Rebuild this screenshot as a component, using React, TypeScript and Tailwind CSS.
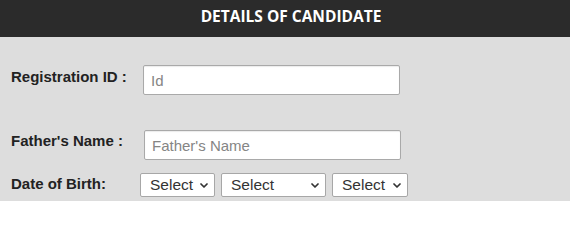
import React from "react";

function Chevron() {
  return (
    <svg width="8" height="5" viewBox="0 0 8 5" className="shrink-0">
      <path d="M1 1 L4 4 L7 1" fill="none" stroke="#333" strokeWidth="1.7" strokeLinecap="round" strokeLinejoin="round" />
    </svg>
  );
}

function FakeSelect({ w }: { w: string }) {
  return (
    <div
      className={`${w} h-[24px] bg-white border border-[#a7a7a7] rounded-[2px] flex items-center justify-between pl-[9px] pr-[6px] text-[15.5px] text-[#333] leading-none`}
      style={{ fontFamily: '"Liberation Sans", Arial, sans-serif' }}
    >
      <span>Select</span>
      <Chevron />
    </div>
  );
}

export default function App() {
  const sans = { fontFamily: '"Liberation Sans", Arial, sans-serif' };
  return (
    <div className="w-[570px] h-[201px] bg-[#dddddd] overflow-hidden" style={sans}>
      <div className="h-[37px] bg-[#2b2b2b] flex justify-center pt-[7px] pl-[12px]">
        <span
          className="text-white font-bold text-[15.5px] leading-[18px]"
          style={{ fontFamily: '"Open Sans", sans-serif' }}
        >
          DETAILS OF CANDIDATE
        </span>
      </div>

      <div className="flex items-start mt-[28px] pl-[11px]">
        <label className="w-[132px] mt-[3px] text-[15px] leading-[17px] font-bold text-[#222]">
          Registration ID :
        </label>
        <input
          placeholder="Id"
          className="w-[257px] h-[30px] bg-white border border-[#a9a9a9] rounded-[2px] pl-[7px] text-[15px] text-[#333] placeholder:text-[#858585] outline-none shadow-[inset_0_1px_1px_rgba(0,0,0,0.08)]"
          style={sans}
        />
      </div>

      <div className="flex items-start mt-[35px] pl-[11px]">
        <label className="w-[133px] mt-[2px] text-[15px] leading-[17px] font-bold text-[#222]">
          Father's Name :
        </label>
        <input
          placeholder="Father's Name"
          className="w-[257px] h-[30px] bg-white border border-[#a9a9a9] rounded-[2px] pl-[7px] text-[15px] text-[#333] placeholder:text-[#858585] outline-none shadow-[inset_0_1px_1px_rgba(0,0,0,0.08)]"
          style={sans}
        />
      </div>

      <div className="flex items-start mt-[13px] pl-[11px]">
        <label className="w-[129px] mt-[2px] text-[15px] leading-[17px] font-bold text-[#222]">
          Date of Birth:
        </label>
        <div className="flex gap-[6px]">
          <FakeSelect w="w-[75px]" />
          <FakeSelect w="w-[105px]" />
          <FakeSelect w="w-[76px]" />
        </div>
      </div>
    </div>
  );
}
